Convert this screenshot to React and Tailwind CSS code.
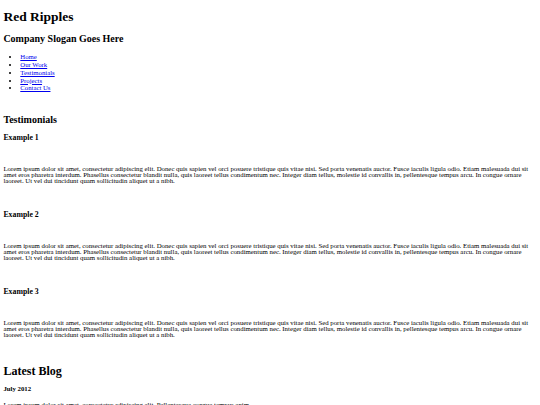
const navLinks = ['Home', 'Our Work', 'Testimonials', 'Projects', 'Contact Us'];

const lorem =
  'Lorem ipsum dolor sit amet, consectetur adipiscing elit. Donec quis sapien vel orci posuere tristique quis vitae nisi. Sed porta venenatis auctor. Fusce iaculis ligula odio. Etiam malesuada dui sit amet eros pharetra interdum. Phasellus consectetur blandit nulla, quis laoreet tellus condimentum nec. Integer diam tellus, molestie id convallis in, pellentesque tempus arcu. In congue ornare laoreet. Ut vel dui tincidunt quam sollicitudin aliquet ut a nibh.';

const testimonials = ['Example 1', 'Example 2', 'Example 3'];

export default function App() {
  return (
    <div className="min-h-[405px] bg-white px-[3.4px] pb-4 font-['Liberation_Serif',serif] text-black">
      <header>
        <h1 className="mt-[8.6px] text-[13.5px] font-bold leading-[15.5px]">Red Ripples</h1>
        <h2 className="mt-[8.6px] text-[10px] font-bold leading-[11.5px]">Company Slogan Goes Here</h2>
        <nav>
          <ul className="mt-[9.2px] list-disc pl-[16.9px] text-[6.75px] leading-[7.75px]">
            {navLinks.map(link => (
              <li key={link}>
                <a href="#" className="text-[#0000ee] underline">
                  {link}
                </a>
              </li>
            ))}
          </ul>
        </nav>
      </header>

      <section>
        <h2 className="mt-[22.2px] text-[10px] font-bold leading-[11.5px]">Testimonials</h2>
        {testimonials.map((title, i) => (
          <div key={title}>
            <h3
              className={`${i === 0 ? 'mt-[7.6px]' : 'mt-[26.8px]'} text-[7.8px] font-bold leading-[9px]`}
            >
              {title}
            </h3>
            <p className="mt-[23.2px] text-[6.8px] leading-[6px]">{lorem}</p>
          </div>
        ))}
      </section>

      <section>
        <h2 className="mt-[27px] text-[12px] font-bold leading-[13.8px]">Latest Blog</h2>
        <h4 className="mt-[6.3px] text-[6.8px] font-bold leading-[7.8px]">July 2012</h4>
        <p className="mt-[9.1px] text-[6.8px] leading-[6px]">
          Lorem ipsum dolor sit amet, consectetur adipiscing elit. Pellentesque congue tempus enim.
        </p>
      </section>
    </div>
  );
}
